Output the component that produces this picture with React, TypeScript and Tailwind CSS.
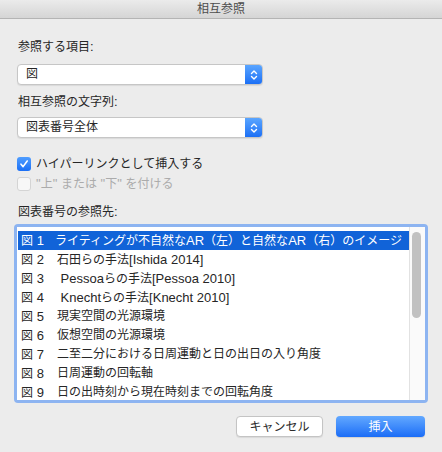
import React from 'react';

const rows: { num: string; text: string }[] = [
  { num: '図 1', text: 'ライティングが不自然なAR（左）と自然なAR（右）のイメージ' },
  { num: '図 2', text: '石田らの手法[Ishida 2014]' },
  { num: '図 3', text: '\u00a0Pessoaらの手法[Pessoa 2010]' },
  { num: '図 4', text: '\u00a0Knechtらの手法[Knecht 2010]' },
  { num: '図 5', text: '現実空間の光源環境' },
  { num: '図 6', text: '仮想空間の光源環境' },
  { num: '図 7', text: '二至二分における日周運動と日の出日の入り角度' },
  { num: '図 8', text: '日周運動の回転軸' },
  { num: '図 9', text: '日の出時刻から現在時刻までの回転角度' },
];

// latin runs render a touch larger than the kana/kanji, like the system font does
const Mixed: React.FC<{ text: string }> = ({ text }) => (
  <>
    {text.split(/([\u0020-\u007e\u00a0]+)/).map((part, i) =>
      /^[\u0020-\u007e\u00a0]+$/.test(part) ? (
        <span key={i} className="text-[13px]">
          {part}
        </span>
      ) : (
        <React.Fragment key={i}>{part}</React.Fragment>
      )
    )}
  </>
);

const Popup: React.FC<{ value: string }> = ({ value }) => (
  <div className="flex h-[21px] w-[246px] rounded-[4px] border border-[#c6c6c6] bg-white shadow-[0_1px_1px_rgba(0,0,0,0.08)] overflow-hidden">
    <div className="flex-1 pl-[8px] leading-[19px] text-[#262626]">{value}</div>
    <div className="flex w-[17px] items-center justify-center bg-gradient-to-b from-[#5aa5ff] to-[#1b6ff5]">
      <svg width="8" height="12" viewBox="0 0 8 12" fill="none" stroke="white" strokeWidth="1.4" strokeLinecap="round" strokeLinejoin="round">
        <path d="M1.5 4.5 L4 2 L6.5 4.5" />
        <path d="M1.5 7.5 L4 10 L6.5 7.5" />
      </svg>
    </div>
  </div>
);

export default function App() {
  return (
    <div
      className="w-[442px] h-[452px] bg-[#ececec] text-[12px] text-[#262626] overflow-hidden"
      style={{ fontFamily: '"Liberation Sans", "Noto Sans CJK JP", sans-serif' }}
    >
      <div className="flex h-[19px] items-center justify-center border-b border-[#b4b4b4] bg-gradient-to-b from-[#ebebeb] to-[#d5d5d5] text-[#4d4d4d]">
        相互参照
      </div>

      <div className="px-[17px] pt-[20px]">
        <div className="pl-[1px] leading-[16px]">参照する項目<span className="text-[13px]">:</span></div>
        <div className="mt-[9px]">
          <Popup value="図" />
        </div>

        <div className="mt-[9px] pl-[1px] leading-[16px]">相互参照の文字列<span className="text-[13px]">:</span></div>
        <div className="mt-[7px]">
          <Popup value="図表番号全体" />
        </div>

        <div className="mt-[18px] flex h-[16px] items-center gap-[5px]">
          <div className="flex h-[14px] w-[14px] items-center justify-center rounded-[3px] bg-gradient-to-b from-[#4f9dff] to-[#1a6ff5]">
            <svg width="10" height="10" viewBox="0 0 10 10" fill="none" stroke="white" strokeWidth="1.6" strokeLinecap="round" strokeLinejoin="round">
              <path d="M2 5.2 L4.1 7.6 L8.2 2" />
            </svg>
          </div>
          <span className="leading-[16px]">ハイパーリンクとして挿入する</span>
        </div>
        <div className="mt-[4px] flex h-[16px] items-center gap-[5px]">
          <div className="h-[14px] w-[14px] rounded-[3px] border border-[#d4d4d4] bg-[#f7f7f7]" />
          <span className="leading-[16px] text-[#ababab]">
            <Mixed text={'"上" または "下" を付ける'} />
          </span>
        </div>

        <div className="mt-[12px] pl-[1px] leading-[16px]">図表番号の参照先<span className="text-[13px]">:</span></div>

        <div className="-ml-[3px] mt-[4px] h-[179px] w-[414px] rounded-[4px] bg-[#8db4f1] p-[3px]">
          <div className="flex h-full bg-white">
            <div className="flex-1 overflow-hidden pl-[1px] pt-[4px]">
              {rows.map((r, i) => (
                <div
                  key={r.num}
                  className={`flex h-[19px] items-center pl-[3px] whitespace-nowrap leading-[19px] ${
                    i === 0 ? 'bg-[#1163d8] text-white' : ''
                  }`}
                >
                  <span className={i === 0 ? 'w-[34px]' : 'w-[36px]'}>
                    <Mixed text={r.num} />
                  </span>
                  <span>
                    <Mixed text={r.text} />
                  </span>
                </div>
              ))}
            </div>
            <div className="w-[16px] border-l border-[#e2e2e2] bg-[#fafafa] pl-[2px] pt-[5px]">
              <div className="h-[86px] w-[9px] rounded-full bg-[#c1c1c1]" />
            </div>
          </div>
        </div>

        <div className="mt-[13px] flex justify-end gap-[13px]">
          <button className="h-[21px] w-[87px] rounded-[4px] border border-[#c4c4c4] bg-white text-[12px] text-[#2a2a2a] shadow-[0_1px_1px_rgba(0,0,0,0.08)]">
            キャンセル
          </button>
          <button className="h-[21px] w-[89px] rounded-[4px] bg-gradient-to-b from-[#62a8ff] to-[#1a6cf6] text-[12px] text-white shadow-[0_1px_1px_rgba(0,0,0,0.12)]">
            挿入
          </button>
        </div>
      </div>
    </div>
  );
}
